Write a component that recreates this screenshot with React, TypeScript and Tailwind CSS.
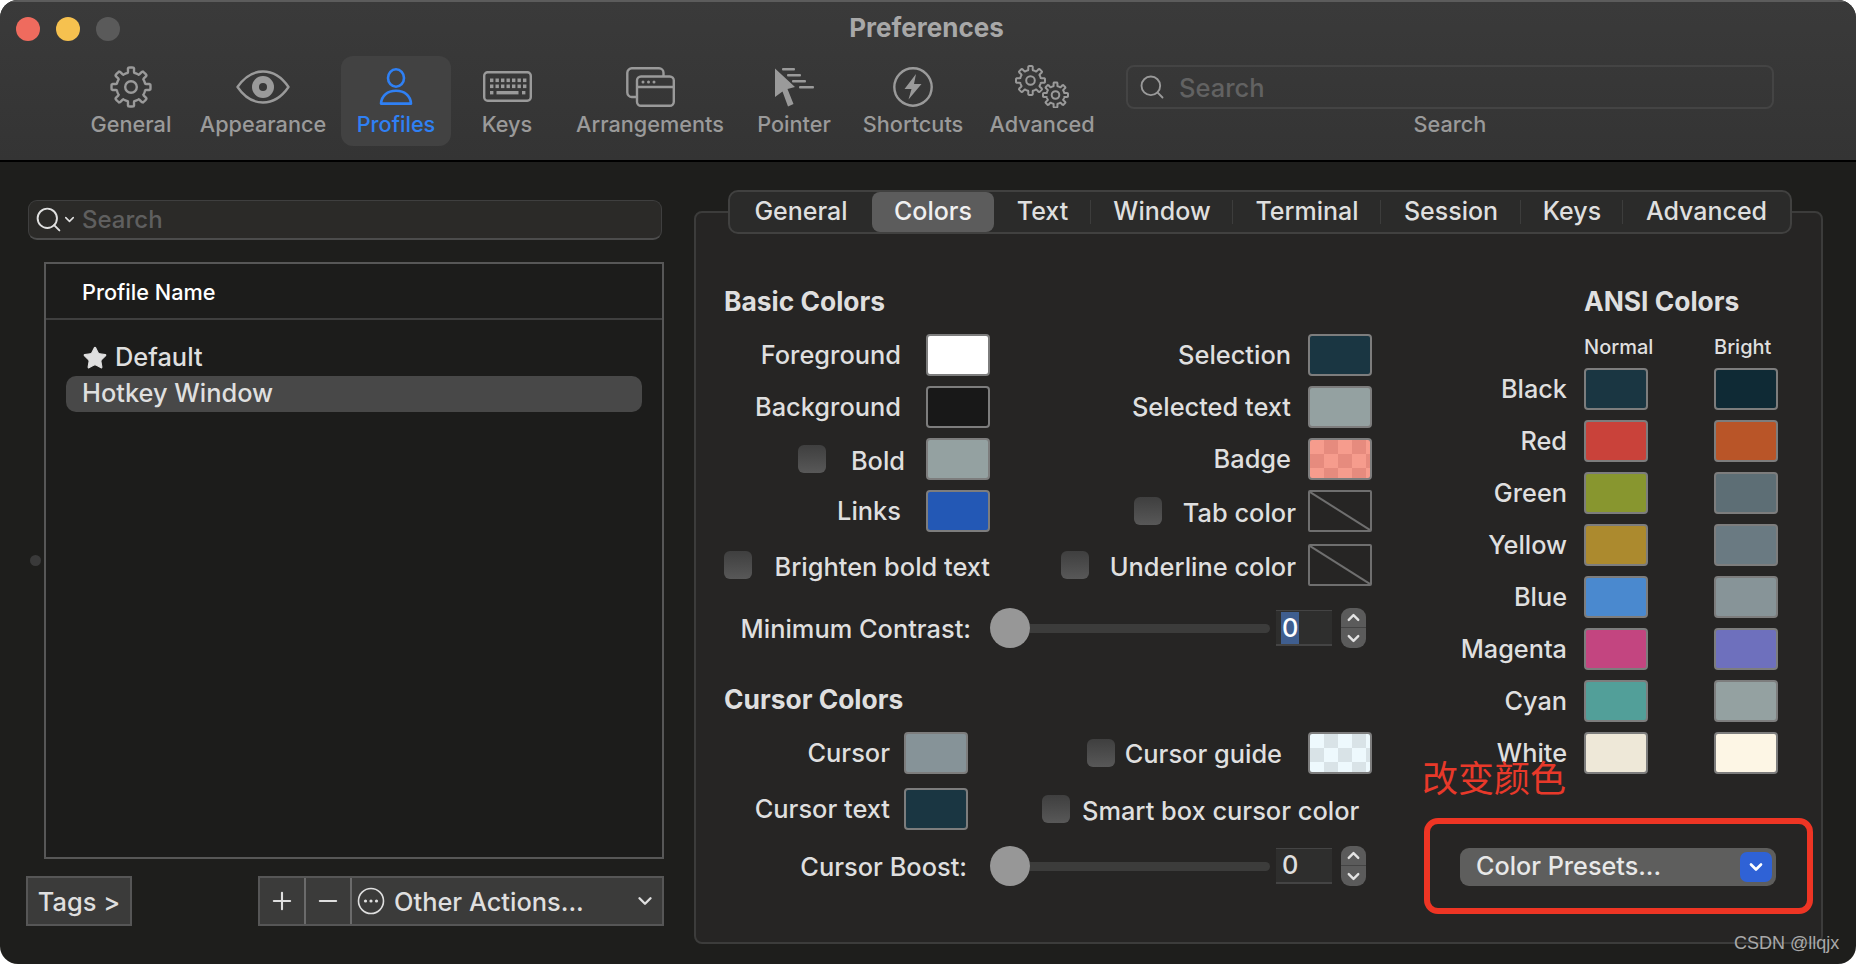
import React from "react";
import { ChevronDown, ChevronUp, Plus, Minus, Search, Star } from "lucide-react";

function gearPath(cx: number, cy: number, ro: number, ri: number, n: number) {
  const pts: string[] = [];
  const steps = n * 24;
  for (let i = 0; i < steps; i++) {
    const a = (i / steps) * Math.PI * 2 - Math.PI / 2;
    const c = Math.cos(n * (a + Math.PI / 2));
    const t = Math.min(1, Math.max(0, (c + 0.15) / 0.55));
    const s = t * t * (3 - 2 * t);
    const r = ri + (ro - ri) * s;
    pts.push(`${(cx + r * Math.cos(a)).toFixed(2)} ${(cy + r * Math.sin(a)).toFixed(2)}`);
  }
  return "M" + pts.join("L") + "Z";
}

const GearIcon = () => (
  <svg width="42" height="42" viewBox="0 0 42 42" fill="none" stroke="#9a9a9a" strokeWidth="2.4" strokeLinejoin="round">
    <path d={gearPath(21, 21, 19.5, 14.5, 8)} />
    <circle cx="21" cy="21" r="5.8" />
  </svg>
);

const EyeIcon = () => (
  <svg width="54" height="34" viewBox="0 0 54 34" fill="none">
    <path d="M1.5 17C9 6 17 1.5 27 1.5S45 6 52.5 17C45 28 37 32.5 27 32.5S9 28 1.5 17Z" stroke="#9a9a9a" strokeWidth="2.4" strokeLinejoin="round" />
    <circle cx="27" cy="17" r="11" fill="#9a9a9a" />
    <circle cx="27" cy="17" r="4" fill="#373737" />
  </svg>
);

const PersonIcon = () => (
  <svg width="34" height="37" viewBox="0 0 34 37" fill="none" stroke="#2f80f4" strokeWidth="2.6">
    <ellipse cx="17" cy="10" rx="8" ry="8.7" />
    <path d="M2 35.6C2.5 27.5 8.5 22.8 17 22.8S31.5 27.5 32 35.6Z" strokeLinejoin="round" />
  </svg>
);

const KeyboardIcon = () => {
  const dots: React.ReactNode[] = [];
  for (let r = 0; r < 2; r++) {
    for (let c = 0; c < 7; c++) {
      dots.push(<rect key={`${r}-${c}`} x={7 + c * 5.5} y={7.5 + r * 6} width="3.4" height="3.6" fill="#9a9a9a" />);
    }
  }
  return (
    <svg width="49" height="31" viewBox="0 0 49 31" fill="none">
      <rect x="1.2" y="1.2" width="46.6" height="28.6" rx="3.5" stroke="#9a9a9a" strokeWidth="2.4" />
      {dots}
      <rect x="7" y="20" width="3.4" height="3.4" fill="#9a9a9a" />
      <rect x="13.5" y="20" width="22" height="3.4" fill="#9a9a9a" />
      <rect x="39" y="20" width="3.4" height="3.4" fill="#9a9a9a" />
    </svg>
  );
};

const ArrangementsIcon = () => (
  <svg width="49" height="40" viewBox="0 0 49 40" fill="none" stroke="#9a9a9a" strokeWidth="2.4">
    <path d="M11 30H6A4.5 4.5 0 0 1 1.3 25.5V5.7A4.5 4.5 0 0 1 6 1.3H33A4.5 4.5 0 0 1 37.5 5.7V9" />
    <rect x="11" y="9.5" width="36.8" height="29.3" rx="4" />
    <path d="M11 20H47.8" />
    <circle cx="17" cy="15" r="1.5" fill="#9a9a9a" stroke="none" />
    <circle cx="22.5" cy="15" r="1.5" fill="#9a9a9a" stroke="none" />
    <circle cx="28" cy="15" r="1.5" fill="#9a9a9a" stroke="none" />
  </svg>
);

const PointerIcon = () => (
  <svg width="40" height="40" viewBox="0 0 40 40" fill="#9a9a9a">
    <path d="M1 1.5 L21 20 L13.5 22 L19.5 37 L14 39.5 L8.5 24.5 L1 30 Z" />
    <rect x="8" y="1" width="13" height="2.6" rx="1" />
    <rect x="13" y="7" width="14" height="2.6" rx="1" />
    <rect x="18" y="13" width="14" height="2.6" rx="1" />
    <rect x="25" y="19" width="15" height="2.6" rx="1" />
  </svg>
);

const ShortcutIcon = () => (
  <svg width="40" height="40" viewBox="0 0 40 40" fill="none">
    <circle cx="20" cy="20" r="18.7" stroke="#9a9a9a" strokeWidth="2.4" />
    <path d="M23 7 L11.5 22 H18.5 L15.5 32.5 L28.5 17 H21 Z" fill="#9a9a9a" />
  </svg>
);

const AdvancedIcon = () => (
  <svg width="54" height="43" viewBox="0 0 54 43" fill="none" stroke="#9a9a9a" strokeWidth="2" strokeLinejoin="round">
    <path d={gearPath(15.5, 15.5, 14.5, 10.5, 8)} />
    <circle cx="15.5" cy="15.5" r="4.3" />
    <path d={gearPath(40.5, 30, 12.5, 9, 8)} />
    <circle cx="40.5" cy="30" r="3.8" />
  </svg>
);

const toolbar = [
  { label: "General", w: "w-[108px]", icon: <GearIcon /> },
  { label: "Appearance", w: "w-[156px]", icon: <EyeIcon /> },
  { label: "Profiles", w: "w-[110px]", icon: <PersonIcon />, active: true },
  { label: "Keys", w: "w-[112px]", icon: <KeyboardIcon /> },
  { label: "Arrangements", w: "w-[174px]", icon: <ArrangementsIcon /> },
  { label: "Pointer", w: "w-[114px]", icon: <PointerIcon /> },
  { label: "Shortcuts", w: "w-[124px]", icon: <ShortcutIcon /> },
  { label: "Advanced", w: "w-[134px]", icon: <AdvancedIcon /> },
];

const tabs = [
  { label: "General", w: "w-[142px]" },
  { label: "Colors", w: "w-[122px]", active: true },
  { label: "Text", w: "w-[97px]" },
  { label: "Window", w: "w-[142px]" },
  { label: "Terminal", w: "w-[148px]" },
  { label: "Session", w: "w-[140px]" },
  { label: "Keys", w: "w-[102px]" },
  { label: "Advanced", w: "w-[167px]" },
];

const Check = () => (
  <div className="w-[28px] h-[28px] shrink-0 rounded-[6px] bg-gradient-to-b from-[#3f3f3f] to-[#585858]" />
);

const Swatch = ({ className = "" }: { className?: string }) => (
  <div className={`w-[64px] h-[42px] shrink-0 rounded-[4px] border-2 border-[#7d7d7d] ${className}`} />
);

const NoColor = () => (
  <div className="w-[64px] h-[42px] shrink-0 rounded-[2px] border-2 border-[#6f6f6f] overflow-hidden">
    <svg className="block w-full h-full" viewBox="0 0 60 38" preserveAspectRatio="none">
      <line x1="0" y1="0" x2="60" y2="38" stroke="#6f6f6f" strokeWidth="2" />
    </svg>
  </div>
);

const Stepper = () => (
  <div className="w-[25px] h-[40px] rounded-[9px] bg-[#5b5b5b] flex flex-col items-center text-[#e4e4e4]">
    <div className="h-[20px] w-full flex items-center justify-center border-b border-[#444]">
      <ChevronUp size={19} strokeWidth={3} />
    </div>
    <div className="h-[20px] flex items-center justify-center">
      <ChevronDown size={19} strokeWidth={3} />
    </div>
  </div>
);

const SliderRow = ({ label, labelClass, selected }: { label: string; labelClass: string; selected?: boolean }) => (
  <div className="flex items-center h-[40px]">
    <div className={`text-right ${labelClass}`}>{label}</div>
    <div className="w-[40px] h-[40px] rounded-full bg-[#979797] shrink-0" />
    <div className="w-[240px] h-[9px] rounded-r-full bg-[#3c3c3b] shrink-0" />
    <div className="ml-[6px] w-[56px] h-[36px] bg-[#2e2e2d] border-t border-b-2 border-[#444] pl-[5px] flex items-center shrink-0">
      <span className={selected ? "bg-[#3f5e8f] px-[1px] leading-[32px] text-white" : "px-[1px]"}>0</span>
    </div>
    <div className="ml-[9px]">
      <Stepper />
    </div>
  </div>
);

const ansi = [
  ["Black", "bg-[#1a3642]", "bg-[#0f2a35]"],
  ["Red", "bg-[#c9423a]", "bg-[#b95528]"],
  ["Green", "bg-[#88962f]", "bg-[#5d6e75]"],
  ["Yellow", "bg-[#ac8a2e]", "bg-[#6a7a82]"],
  ["Blue", "bg-[#4a89cf]", "bg-[#879498]"],
  ["Magenta", "bg-[#c34580]", "bg-[#6e70bd]"],
  ["Cyan", "bg-[#529f99]", "bg-[#94a1a1]"],
  ["White", "bg-[#eee8d8]", "bg-[#fdf6e5]"],
];

export default function App() {
  return (
    <div className="w-[1856px] h-[964px] bg-white overflow-hidden whitespace-nowrap font-['Inter','Noto_Sans_CJK_SC',sans-serif] text-[25.4px] font-[450] text-[#dfdfdf]">
      <div className="relative w-full h-full rounded-[18px] overflow-hidden bg-[#1e1e1c] flex flex-col">
        {/* Title bar + toolbar */}
        <header className="h-[162px] shrink-0 bg-gradient-to-b from-[#3a3a3a] to-[#343434] border-t-2 border-t-[#5c5c5c] border-b-2 border-b-black">
          <div className="h-[54px] grid grid-cols-[1fr_auto_1fr] items-center">
            <div className="flex gap-[16px] pl-[16px] pb-[1px]">
              <div className="w-[24px] h-[24px] rounded-full bg-[#ef6b5e]" />
              <div className="w-[24px] h-[24px] rounded-full bg-[#f6c14f]" />
              <div className="w-[24px] h-[24px] rounded-full bg-[#5a5a5a]" />
            </div>
            <div className="text-[26px] font-bold text-[#a8a8a8] pb-[3px] mr-[3px]">Preferences</div>
            <div />
          </div>
          <div className="flex pl-[77px]">
            {toolbar.map((t) => (
              <div
                key={t.label}
                className={`${t.w} h-[90px] shrink-0 flex flex-col items-center rounded-[12px] ${t.active ? "bg-[#424242] text-[#2f80f4]" : "text-[#9a9a9a]"}`}
              >
                <div className="h-[55px] pt-[6px] flex items-center justify-center">{t.icon}</div>
                <div className="text-[21.7px] leading-[26px]">{t.label}</div>
              </div>
            ))}
            <div className="ml-[17px] w-[648px] flex flex-col items-center">
              <div className="mt-[9px] w-full h-[44px] rounded-[8px] border-2 border-[#444] flex items-center pl-[10px] text-[#626262] text-[25.5px]">
                <Search size={28} strokeWidth={1.6} className="text-[#9a9a9a] shrink-0" />
                <span className="ml-[13px] pt-[3px]">Search</span>
              </div>
              <div className="mt-[2px] text-[21.7px] leading-[26px] text-[#9a9a9a]">Search</div>
            </div>
          </div>
        </header>

        {/* Body */}
        <div className="flex flex-1 min-h-0">
          <div className="w-[694px] shrink-0 pt-[38px]">
            <div className="ml-[28px] w-[634px] h-[40px] rounded-[9px] bg-[#2b2a28] border border-[#3f3f3f] border-b-2 border-b-[#4c4c4c] flex items-center pl-[5px] text-[#5f5f5f] text-[24px]">
              <Search size={29} strokeWidth={1.6} className="text-[#e0e0e0] shrink-0" />
              <ChevronDown size={15} strokeWidth={2.5} className="text-[#e0e0e0] -ml-[1px]" />
              <span className="ml-[5px]">Search</span>
            </div>
            <div className="ml-[44px] mt-[22px] w-[620px] h-[597px] border-2 border-[#575757] bg-[#1c1c1b] flex flex-col">
              <div className="h-[56px] border-b-2 border-[#3f3f3f] flex items-center pl-[36px] pt-[2px] text-[21.7px] font-medium text-white">
                Profile Name
              </div>
              <div className="pt-[20px] px-[20px]">
                <div className="h-[36px] flex items-center pl-[16px]">
                  <Star size={26} fill="#dfdfdf" strokeWidth={1} className="text-[#dfdfdf]" />
                  <span className="ml-[7px] pb-[2px]">Default</span>
                </div>
                <div className="h-[36px] rounded-[10px] bg-[#484848] flex items-center pl-[16px] pb-[2px]">Hotkey Window</div>
              </div>
            </div>
            <div className="ml-[26px] mt-[17px] w-[638px] h-[50px] flex justify-between">
              <div className="w-[106px] border-2 border-[#565656] bg-[#3b3b3a] flex items-center justify-center pt-[2px]">Tags &gt;</div>
              <div className="w-[406px] border-2 border-[#565656] bg-[#3b3b3a] flex">
                <div className="w-[46px] border-r-2 border-[#6b6b6b] flex items-center justify-center">
                  <Plus size={28} strokeWidth={1.8} />
                </div>
                <div className="w-[46px] border-r-2 border-[#6b6b6b] flex items-center justify-center">
                  <Minus size={28} strokeWidth={1.8} />
                </div>
                <div className="flex-1 flex items-center pl-[5px] pr-[6px]">
                  <svg width="28" height="28" viewBox="0 0 28 28" fill="none" className="shrink-0">
                    <circle cx="14" cy="14" r="12.5" stroke="#dfdfdf" strokeWidth="1.6" />
                    <circle cx="8.5" cy="14" r="1.6" fill="#dfdfdf" />
                    <circle cx="14" cy="14" r="1.6" fill="#dfdfdf" />
                    <circle cx="19.5" cy="14" r="1.6" fill="#dfdfdf" />
                  </svg>
                  <span className="ml-[9px] pt-[2px]">Other Actions...</span>
                  <ChevronDown size={22} strokeWidth={2.6} className="ml-auto" />
                </div>
              </div>
            </div>
          </div>

          {/* Colors panel */}
          <div className="mt-[49px] w-[1129px] h-[733px] shrink-0 rounded-[8px] border-2 border-[#3c3c3b] bg-[#262524]">
            <div className="ml-[32px] -mt-[23px] w-[1064px] h-[44px] rounded-[10px] border-2 border-[#414140] bg-[#2b2b2a] flex items-center text-[25px]">
              {tabs.map((t, i) => (
                <React.Fragment key={t.label}>
                  <div
                    className={`${t.w} shrink-0 h-[40px] flex items-center justify-center ${t.active ? "bg-[#5c5c5c] rounded-[8px] text-[#f0f0f0]" : ""}`}
                  >
                    {t.label}
                  </div>
                  {i > 1 && i < 7 ? <div className="w-px h-[24px] -ml-px bg-[#3d3d3c] shrink-0" /> : null}
                </React.Fragment>
              ))}
            </div>

            <div className="flex">
              {/* Basic + cursor */}
              <div className="ml-[29px] w-[647px] shrink-0 pt-[52px]">
                <div className="-ml-[1px] h-[30px] leading-[30px] font-bold text-[26.4px]">Basic Colors</div>
                <div className="mt-[18px] flex justify-between">
                  <div className="w-[265px] flex flex-col gap-[10px]">
                    <div className="h-[42px] flex items-center justify-end">
                      <span>Foreground</span>
                      <Swatch className="ml-[25px] bg-white" />
                    </div>
                    <div className="h-[42px] flex items-center justify-end">
                      <span>Background</span>
                      <Swatch className="ml-[25px] bg-[#181818]" />
                    </div>
                    <div className="h-[42px] flex items-center justify-end">
                      <Check />
                      <span className="ml-[25px] pt-[5px]">Bold</span>
                      <Swatch className="ml-[21px] bg-[#94a1a1]" />
                    </div>
                    <div className="h-[42px] flex items-center justify-end">
                      <span>Links</span>
                      <Swatch className="ml-[25px] bg-[#2358b5]" />
                    </div>
                    <div className="mt-[2px] h-[42px] flex items-center justify-between">
                      <div className="-ml-[1px]">
                        <Check />
                      </div>
                      <span className="pt-[5px]">Brighten bold text</span>
                    </div>
                  </div>
                  <div className="w-[310px] flex flex-col gap-[10px]">
                    <div className="h-[42px] flex items-center justify-end">
                      <span>Selection</span>
                      <Swatch className="ml-[17px] bg-[#1a3642]" />
                    </div>
                    <div className="h-[42px] flex items-center justify-end">
                      <span>Selected text</span>
                      <Swatch className="ml-[17px] bg-[#94a1a1]" />
                    </div>
                    <div className="h-[42px] flex items-center justify-end">
                      <span>Badge</span>
                      <Swatch className="ml-[17px] bg-[repeating-conic-gradient(#e68b7e_0%_25%,#f69c8d_0%_50%)] bg-[length:28px_28px]" />
                    </div>
                    <div className="h-[42px] flex items-center justify-end">
                      <Check />
                      <span className="ml-[21px] mr-[12px] pt-[5px]">Tab color</span>
                      <NoColor />
                    </div>
                    <div className="mt-[2px] h-[42px] flex items-center justify-end">
                      <Check />
                      <span className="ml-[21px] mr-[12px] pt-[5px]">Underline color</span>
                      <NoColor />
                    </div>
                  </div>
                </div>
                <div className="mt-[22px]">
                  <SliderRow label="Minimum Contrast:" labelClass="w-[246px] mr-[19px] pt-[2px]" selected />
                </div>

                <div className="-ml-[1px] mt-[36px] h-[30px] leading-[30px] font-bold text-[26.4px]">Cursor Colors</div>
                <div className="mt-[18px] flex justify-between">
                  <div className="w-[243px] flex flex-col gap-[14px]">
                    <div className="h-[42px] flex items-center justify-end">
                      <span>Cursor</span>
                      <Swatch className="ml-[14px] bg-[#869398] border-[#5e5e5e]" />
                    </div>
                    <div className="h-[42px] flex items-center justify-end">
                      <span>Cursor text</span>
                      <Swatch className="ml-[14px] bg-[#1a3642] border-[#5e5e5e]" />
                    </div>
                  </div>
                  <div className="w-[330px] flex flex-col gap-[14px]">
                    <div className="h-[42px] flex items-center justify-end">
                      <Check />
                      <span className="ml-[10px] mr-[26px] pt-[3px]">Cursor guide</span>
                      <Swatch className="bg-[repeating-conic-gradient(#d9e3e7_0%_25%,#eef9fd_0%_50%)] bg-[length:28px_28px]" />
                    </div>
                    <div className="h-[42px] flex items-center">
                      <Check />
                      <span className="ml-[12px] pt-[5px]">Smart box cursor color</span>
                    </div>
                  </div>
                </div>
                <div className="mt-[16px]">
                  <SliderRow label="Cursor Boost:" labelClass="w-[242px] mr-[23px] pt-[2px]" />
                </div>
              </div>

              {/* ANSI */}
              <div className="ml-[28px] shrink-0 pt-[52px]">
                <div className="ml-[184px] h-[30px] leading-[30px] font-bold text-[26.4px]">ANSI Colors</div>
                <div className="mt-[19px] ml-[184px] h-[24px] flex text-[20px] leading-[24px]">
                  <div className="w-[130px]">Normal</div>
                  <div>Bright</div>
                </div>
                <div className="mt-[9px] flex flex-col gap-[10px]">
                  {ansi.map(([name, a, b]) => (
                    <div key={name} className="flex items-center h-[42px]">
                      <div className="w-[167px] text-right text-[25.3px]">{name}</div>
                      <Swatch className={`ml-[17px] ${a}`} />
                      <Swatch className={`ml-[66px] ${b}`} />
                    </div>
                  ))}
                </div>
                <div className="mt-[74px] ml-[60px] w-[316px] h-[38px] rounded-[9px] bg-[#5e5e5d] flex items-center pl-[16px] pr-[4px] text-[#e8e8e8] text-[25.2px]">
                  <span>Color Presets...</span>
                  <div className="ml-auto w-[32px] h-[30px] rounded-[7px] bg-[#2f62d6] flex items-center justify-center text-white">
                    <ChevronDown size={20} strokeWidth={3.2} />
                  </div>
                </div>
              </div>
            </div>
          </div>
        </div>

        {/* Overlays */}
        <div className="absolute left-[30px] top-[555px] w-[11px] h-[11px] rounded-full bg-[#3a3a3a]" />
        <div className="absolute left-[1422px] top-[758px] text-[36px] leading-[42px] font-normal text-[#e8392a] whitespace-nowrap">
          改变颜色
        </div>
        <div className="absolute left-[1424px] top-[818px] w-[389px] h-[96px] rounded-[14px] border-[6px] border-[#ee3524]" />
        <div className="absolute left-[1734px] top-[932px] text-[18px] leading-[22px] font-normal text-[#a9a9a9] whitespace-nowrap font-['Liberation_Sans',sans-serif]">
          CSDN @llqjx
        </div>
      </div>
    </div>
  );
}
